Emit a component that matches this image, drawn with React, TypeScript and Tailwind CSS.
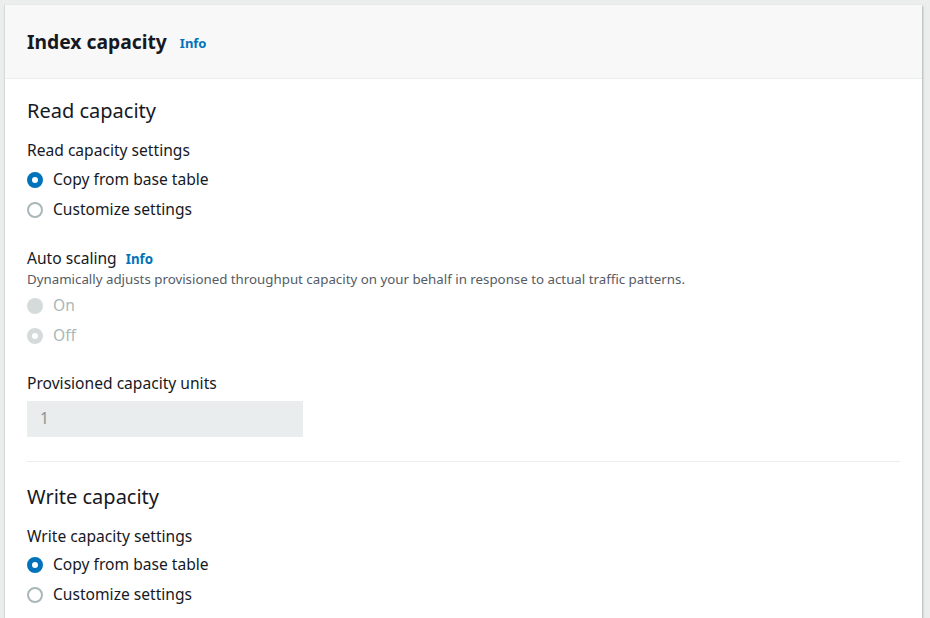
import React from "react";

const font = { fontFamily: '"Noto Sans", "Open Sans", Arial, sans-serif' };

function Radio({ label, state }: { label: string; state: "checked" | "unchecked" | "disabled" | "disabledChecked" }) {
  let circle;
  if (state === "checked") {
    circle = <span className="w-4 h-4 rounded-full border-[5px] border-[#0073bb] bg-white box-border" />;
  } else if (state === "unchecked") {
    circle = <span className="w-4 h-4 rounded-full border-2 border-[#aab7b8] bg-white box-border" />;
  } else if (state === "disabled") {
    circle = <span className="w-4 h-4 rounded-full bg-[#d5dbdb] box-border" />;
  } else {
    circle = <span className="w-4 h-4 rounded-full border-[5px] border-[#d5dbdb] bg-white box-border" />;
  }
  const disabled = state === "disabled" || state === "disabledChecked";
  return (
    <div className="flex items-center h-[30px]">
      {circle}
      <span className={`ml-[10px] text-[15.6px] ${disabled ? "text-[#aab7b8]" : "text-[#16191f]"}`}>{label}</span>
    </div>
  );
}

export default function App() {
  return (
    <div className="w-[930px] h-[618px] bg-[#eceded] overflow-hidden pt-[5px] pl-[4px]" style={font}>
      <div className="w-[918px] h-[640px] bg-white shadow-[1px_1px_2px_rgba(0,0,0,0.25)] border-l border-[#d5dbdb]">
        <div className="h-[74px] bg-[#f8f8f8] border-b border-[#eaeded] flex items-center pl-[22px] pt-[2px]">
          <span className="text-[19.3px] font-bold text-[#16191f]">Index capacity</span>
          <span className="ml-[13px] text-[13px] font-bold text-[#0073bb] mt-[2px]">Info</span>
        </div>
        <div className="pl-[22px] pr-[22px]">
          <div className="pt-[19px] text-[20px] text-[#16191f] leading-[26px]">Read capacity</div>
          <div className="mt-[16px] text-[15.6px] text-[#16191f] leading-[20px]">Read capacity settings</div>
          <div className="mt-[5px]">
            <Radio label="Copy from base table" state="checked" />
            <Radio label="Customize settings" state="unchecked" />
          </div>
          <div className="mt-[23px] flex items-baseline leading-[20px]">
            <span className="text-[15.6px] text-[#16191f]">Auto scaling</span>
            <span className="ml-[9px] text-[13.3px] font-bold text-[#0073bb]">Info</span>
          </div>
          <div className="text-[13.3px] text-[#545b64] leading-[20px]">
            Dynamically adjusts provisioned throughput capacity on your behalf in response to actual traffic patterns.
          </div>
          <div className="mt-[2px]">
            <Radio label="On" state="disabled" />
            <Radio label="Off" state="disabledChecked" />
          </div>
          <div className="mt-[22px] text-[15.6px] text-[#16191f] leading-[20px]">Provisioned capacity units</div>
          <div className="mt-[8px] w-[276px] h-[36px] bg-[#eaeded] flex items-center pl-[13px] text-[15.6px] text-[#879596]">1</div>
          <div className="mt-[24px] h-px bg-[#eaeded]" />
          <div className="pt-[22px] text-[20px] text-[#16191f] leading-[26px]">Write capacity</div>
          <div className="mt-[16px] text-[15.6px] text-[#16191f] leading-[20px]">Write capacity settings</div>
          <div className="mt-[4px]">
            <Radio label="Copy from base table" state="checked" />
            <Radio label="Customize settings" state="unchecked" />
          </div>
        </div>
      </div>
    </div>
  );
}
